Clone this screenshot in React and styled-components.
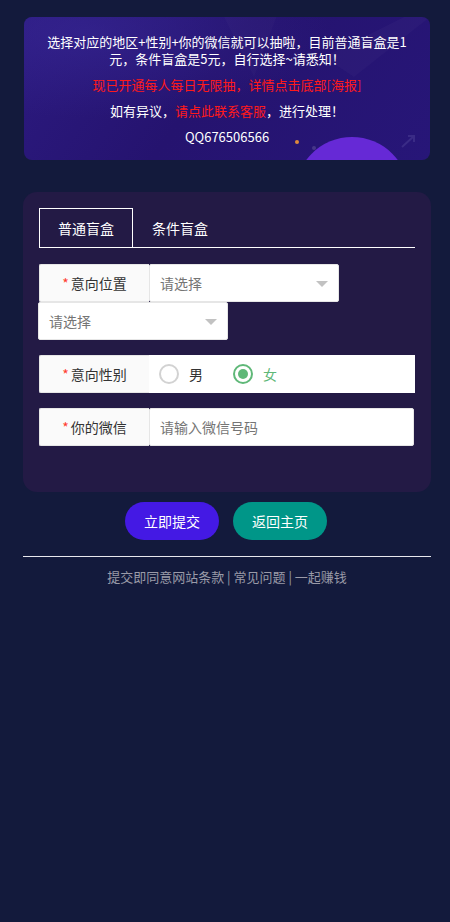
import React, { useState } from 'react';
import styled, { createGlobalStyle } from 'styled-components';

const GlobalStyle = createGlobalStyle`
  html, body {
    margin: 0;
    padding: 0;
    background: #131a3c;
  }
  body {
    font-family: "Noto Sans CJK SC", "Noto Sans", sans-serif;
    font-size: 14px;
    color: #333;
  }
  * { box-sizing: border-box; }
`;

const Page = styled.div`
  width: 408px;
  margin-left: 23px;
  padding-top: 17px;
  min-height: 922px;
`;

const Banner = styled.div`
  position: relative;
  overflow: hidden;
  margin: 0 1px;
  padding: 16px 20px 15px;
  border-radius: 8px;
  background: linear-gradient(125deg, #2c1a80 0%, #25136f 45%, #271678 100%);
  text-align: center;
  font-size: 13px;
  line-height: 17px;
  color: #fff;
`;

const Deco = styled.svg`
  position: absolute;
  left: 0;
  top: 0;
  pointer-events: none;
`;

const Para = styled.p`
  position: relative;
  margin: 0 0 9px;
  color: ${p => (p.$red ? '#ff1a1a' : '#fff')};
  &:last-child { margin-bottom: 0; }
`;

const Red = styled.span`
  color: #ff1a1a;
`;

const Card = styled.div`
  margin-top: 32px;
  padding: 16px 16px 46px;
  border-radius: 14px;
  background: #231a45;
`;

const Tabs = styled.div`
  display: flex;
  height: 40px;
  border-bottom: 1px solid #fff;
  margin-bottom: 16px;
`;

const Tab = styled.div`
  height: 40px;
  padding: 0 18px;
  line-height: 38px;
  color: #fff;
  font-size: 14px;
  border: 1px solid ${p => (p.$active ? '#fff' : 'transparent')};
  border-bottom: none;
  cursor: pointer;
`;

const Item = styled.div`
  display: flex;
  flex-wrap: wrap;
  margin-bottom: 15px;
  &:last-child { margin-bottom: 0; }
`;

const Label = styled.div`
  width: 110px;
  height: 38px;
  line-height: 36px;
  text-align: center;
  background: #fafafa;
  border: 1px solid #e6e6e6;
  border-right: none;
  border-radius: 2px 0 0 2px;
  color: #333;
  font-size: 14px;
`;

const Star = styled.span`
  color: #ff3b30;
  margin-right: 2px;
`;

const Select = styled.div`
  position: relative;
  width: 190px;
  height: 38px;
  margin-left: ${p => (p.$shift ? '-1px' : '0')};
  padding-left: 10px;
  line-height: 36px;
  background: #fff;
  border: 1px solid #e6e6e6;
  border-radius: 2px;
  color: #757575;
  font-size: 14px;
  &::after {
    content: '';
    position: absolute;
    right: 10px;
    top: 16px;
    border: 6px solid transparent;
    border-top-color: #c2c2c2;
    border-bottom: none;
  }
`;

const Input = styled.input`
  flex: 1;
  height: 38px;
  margin-right: 1px;
  padding-left: 10px;
  border: 1px solid #e6e6e6;
  border-radius: 2px;
  background: #fff;
  font-family: inherit;
  font-size: 14px;
  outline: none;
  &::placeholder { color: #757575; }
`;

const RadioBox = styled.div`
  flex: 1;
  display: flex;
  align-items: center;
  height: 38px;
  padding-left: 10px;
  background: #fff;
`;

const Radio = styled.label`
  display: flex;
  align-items: center;
  margin-right: 30px;
  font-size: 14px;
  color: ${p => (p.$on ? '#5fb878' : '#333')};
  cursor: pointer;
`;

const Ring = styled.span`
  position: relative;
  width: 20px;
  height: 20px;
  margin-right: 10px;
  border-radius: 50%;
  border: 2px solid ${p => (p.$on ? '#5fb878' : '#d2d2d2')};
  &::after {
    content: '';
    display: ${p => (p.$on ? 'block' : 'none')};
    position: absolute;
    left: 3px;
    top: 3px;
    width: 10px;
    height: 10px;
    border-radius: 50%;
    background: #5fb878;
  }
`;

const Buttons = styled.div`
  display: flex;
  justify-content: center;
  gap: 14px;
  margin-top: 10px;
  padding-right: 2px;
`;

const Button = styled.button`
  width: 94px;
  height: 38px;
  border: none;
  border-radius: 19px;
  background: ${p => p.$bg};
  color: #fff;
  font-family: inherit;
  font-size: 14px;
  cursor: pointer;
`;

const Rule = styled.div`
  height: 1px;
  margin-top: 16px;
  background: #e8e8ee;
`;

const Footer = styled.div`
  margin-top: 10px;
  text-align: center;
  font-size: 13px;
  line-height: 20px;
  color: #9a9aa8;
`;

const BannerArt = () => (
  <Deco width="406" height="143" viewBox="0 0 406 143">
    <defs>
      <radialGradient id="glow" cx="0.15" cy="0.1" r="0.6">
        <stop offset="0" stopColor="#3a2a9a" stopOpacity="0.5" />
        <stop offset="1" stopColor="#3a2a9a" stopOpacity="0" />
      </radialGradient>
    </defs>
    <rect width="406" height="143" fill="url(#glow)" />
    <path d="M200 0 L260 -20 L230 60 Z" fill="#ffffff" opacity="0.02" />
    <path d="M300 40 L380 0 L406 0 L330 60 Z" fill="#ffffff" opacity="0.025" />
    <circle cx="328" cy="177" r="57" fill="#6629d6" />
    <circle cx="290" cy="131" r="2" fill="#ffffff" opacity="0.15" />
    <circle cx="273" cy="125" r="2" fill="#e08a3c" />
    <path d="M378 130 L390 119 M384 119 L390 119 L390 125" stroke="#3a2b86" strokeWidth="2" fill="none" />
  </Deco>
);

export default function App() {
  const [tab, setTab] = useState(0);
  const [sex, setSex] = useState('f');
  return (
    <>
      <GlobalStyle />
      <Page>
        <Banner>
          <BannerArt />
          <Para>选择对应的地区+性别+你的微信就可以抽啦，目前普通盲盒是1元，条件盲盒是5元，自行选择~请悉知！</Para>
          <Para $red>现已开通每人每日无限抽，详情点击底部[海报]</Para>
          <Para>如有异议，<Red>请点此联系客服</Red>，进行处理！</Para>
          <Para>QQ676506566</Para>
        </Banner>

        <Card>
          <Tabs>
            <Tab $active={tab === 0} onClick={() => setTab(0)}>普通盲盒</Tab>
            <Tab $active={tab === 1} onClick={() => setTab(1)}>条件盲盒</Tab>
          </Tabs>

          <Item>
            <Label><Star>*</Star>意向位置</Label>
            <Select>请选择</Select>
            <Select $shift>请选择</Select>
          </Item>

          <Item>
            <Label><Star>*</Star>意向性别</Label>
            <RadioBox>
              <Radio $on={sex === 'm'} onClick={() => setSex('m')}>
                <Ring $on={sex === 'm'} />男
              </Radio>
              <Radio $on={sex === 'f'} onClick={() => setSex('f')}>
                <Ring $on={sex === 'f'} />女
              </Radio>
            </RadioBox>
          </Item>

          <Item>
            <Label><Star>*</Star>你的微信</Label>
            <Input placeholder="请输入微信号码" />
          </Item>
        </Card>

        <Buttons>
          <Button $bg="#4419e4">立即提交</Button>
          <Button $bg="#009688">返回主页</Button>
        </Buttons>
        <Rule />
        <Footer>提交即同意网站条款 | 常见问题 | 一起赚钱</Footer>
      </Page>
    </>
  );
}
